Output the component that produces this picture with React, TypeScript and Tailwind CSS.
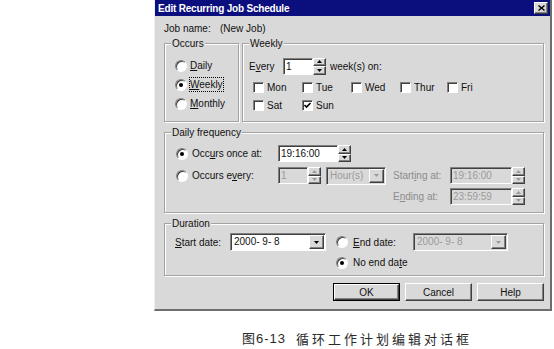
import type { ReactNode } from 'react';

const SUNKEN =
  'border border-t-[#808080] border-l-[#808080] border-b-white border-r-white shadow-[inset_1px_1px_0_#404040]';
const RAISED =
  'border border-t-white border-l-white border-b-[#404040] border-r-[#404040] shadow-[inset_-1px_-1px_0_#808080]';
const ETCHED = 'border border-[#a2a2a2] shadow-[inset_1px_1px_0_#fff,1px_1px_0_#fff]';

// label with a mnemonic letter underlined
function Mn({ t, u }: { t: string; u: number }) {
  return (
    <span className="whitespace-pre">
      {t.slice(0, u)}
      <span className="underline">{t[u]}</span>
      {t.slice(u + 1)}
    </span>
  );
}

function Group({ title, className, children }: { title: string; className: string; children: ReactNode }) {
  return (
    <div className={`relative ${ETCHED} ${className}`}>
      <span className="absolute -top-[7px] left-[6px] px-[1px] bg-[#d9d9d9] leading-[13px]">{title}</span>
      {children}
    </div>
  );
}

function Radio({ checked }: { checked?: boolean }) {
  return (
    <span className="w-[12px] h-[12px] shrink-0 rounded-full bg-white border border-t-[#808080] border-l-[#808080] border-b-white border-r-white shadow-[inset_1px_1px_0_#404040] flex items-center justify-center">
      {checked && <span className="w-[4px] h-[4px] rounded-full bg-black" />}
    </span>
  );
}

function Check({ label, checked }: { label: string; checked?: boolean }) {
  return (
    <div className="flex items-center gap-[3px] h-[13px]">
      <span className={`w-[11px] h-[11px] bg-white ${SUNKEN} flex items-center justify-center`}>
        {checked && (
          <svg width="9" height="9" viewBox="0 0 9 9">
            <path d="M1.5 4 L3.5 6 L7.5 2" fill="none" stroke="#000" strokeWidth="1.6" />
          </svg>
        )}
      </span>
      <span>{label}</span>
    </div>
  );
}

function Arrow({ up, disabled }: { up?: boolean; disabled?: boolean }) {
  return (
    <svg width="5" height="3" viewBox="0 0 5 3">
      <polygon points={up ? '2.5,0 5,3 0,3' : '0,0 5,0 2.5,3'} fill={disabled ? '#9a9a9a' : '#000'} />
    </svg>
  );
}

function Spin({ value, w, disabled }: { value: string; w: string; disabled?: boolean }) {
  return (
    <div className={`flex h-[17px] ${w}`}>
      <div
        className={`flex-1 ${SUNKEN} ${disabled ? 'bg-[#d9d9d9] text-[#9a9a9a]' : 'bg-white'} pl-[2px] leading-[15px]`}
      >
        {value}
      </div>
      <div className="flex flex-col w-[13px]">
        <div className={`flex-1 ${RAISED} bg-[#d9d9d9] flex items-center justify-center`}>
          <Arrow up disabled={disabled} />
        </div>
        <div className={`flex-1 ${RAISED} bg-[#d9d9d9] flex items-center justify-center`}>
          <Arrow disabled={disabled} />
        </div>
      </div>
    </div>
  );
}

function Combo({ value, w, disabled }: { value: string; w: string; disabled?: boolean }) {
  return (
    <div
      className={`flex h-[18px] ${w} ${SUNKEN} ${disabled ? 'bg-[#d9d9d9] text-[#9a9a9a]' : 'bg-white'} p-[1px]`}
    >
      <span className="flex-1 pl-[2px] leading-[14px] whitespace-pre">{value}</span>
      <span className={`w-[15px] ${RAISED} bg-[#d9d9d9] flex items-center justify-center`}>
        <Arrow disabled={disabled} />
      </span>
    </div>
  );
}

function Btn({ children, isDefault }: { children: ReactNode; isDefault?: boolean }) {
  return (
    <div className={`w-[67px] h-[18px] ${isDefault ? 'border border-black' : ''}`}>
      <div className={`w-full h-full ${RAISED} bg-[#d9d9d9] flex items-center justify-center`}>{children}</div>
    </div>
  );
}

export default function App() {
  return (
    <div className="w-[554px] h-[349px] bg-white overflow-hidden font-['Liberation_Sans',Arial,sans-serif] text-[10px] leading-[13px] text-[#111]">
      <div className="ml-[154px] w-[398px] h-[311px] bg-[#d9d9d9] border-l border-l-[#efefef] border-r-2 border-b-2 border-r-[#6e6e6e] border-b-[#6e6e6e]">
        {/* title bar */}
        <div className="h-[16px] bg-[#0b0f7e] flex items-center pl-[3px] pr-[2px]">
          <span className="flex-1 text-white font-bold text-[10px] tracking-[-0.2px]">Edit Recurring Job Schedule</span>
          <span className={`w-[14px] h-[12px] ${RAISED} bg-[#d9d9d9] flex items-center justify-center`}>
            <svg width="7" height="6" viewBox="0 0 7 6">
              <path d="M0.5 0.5 L6.5 5.5 M6.5 0.5 L0.5 5.5" stroke="#000" strokeWidth="1.4" />
            </svg>
          </span>
        </div>

        <div className="pl-[9px]">
          <div className="mt-[6px] flex h-[13px]">
            <span className="w-[56px]">Job name:</span>
            <span>(New Job)</span>
          </div>

          <div className="mt-[8px] flex">
            <Group title="Occurs" className="w-[75px] h-[79px]">
              <div className="pt-[15px] pl-[10px] flex flex-col gap-[6px]">
                <div className="flex items-center gap-[3px] h-[13px]">
                  <Radio />
                  <Mn t="Daily" u={0} />
                </div>
                <div className="flex items-center gap-[3px] h-[13px]">
                  <Radio checked />
                  <span className="outline outline-1 outline-dotted outline-black">
                    <Mn t="Weekly" u={0} />
                  </span>
                </div>
                <div className="flex items-center gap-[3px] h-[13px]">
                  <Radio />
                  <Mn t="Monthly" u={0} />
                </div>
              </div>
            </Group>

            <Group title="Weekly" className="ml-[3px] w-[302px] h-[79px]">
              <div className="pt-[13px] pl-[6px]">
                <div className="flex items-center h-[18px]">
                  <span className="w-[34px]">
                    <Mn t="Every" u={1} />
                  </span>
                  <Spin value="1" w="w-[43px]" />
                  <span className="ml-[4px]">week(s) on:</span>
                </div>
                <div className="mt-[6px] pl-[4px] grid grid-cols-[49px_49px_49px_47px_49px]">
                  <Check label="Mon" />
                  <Check label="Tue" />
                  <Check label="Wed" />
                  <Check label="Thur" />
                  <Check label="Fri" />
                </div>
                <div className="mt-[5px] pl-[4px] grid grid-cols-[49px_49px]">
                  <Check label="Sat" />
                  <Check label="Sun" checked />
                </div>
              </div>
            </Group>
          </div>

          <Group title="Daily frequency" className="mt-[10px] w-[380px] h-[81px]">
            <div className="pt-[12px] pl-[11px]">
              <div className="flex items-center h-[17px]">
                <div className="w-[102px] flex items-center gap-[4px]">
                  <Radio checked />
                  <Mn t="Occurs once at:" u={3} />
                </div>
                <Spin value="19:16:00" w="w-[73px]" />
              </div>
              <div className="mt-[5px] flex items-center h-[17px]">
                <div className="w-[102px] flex items-center gap-[4px]">
                  <Radio />
                  <Mn t="Occurs every:" u={8} />
                </div>
                <Spin value="1" w="w-[43px]" disabled />
                <div className="ml-[5px]">
                  <Combo value="Hour(s)" w="w-[60px]" disabled />
                </div>
                <span className="ml-[7px] w-[57px] text-[#8c8c8c]">
                  <Mn t="Starting at:" u={5} />
                </span>
                <Spin value="19:16:00" w="w-[75px]" disabled />
              </div>
              <div className="mt-[4px] flex items-center h-[17px]">
                <span className="ml-[217px] w-[57px] text-[#8c8c8c]">
                  <Mn t="Ending at:" u={1} />
                </span>
                <Spin value="23:59:59" w="w-[75px]" disabled />
              </div>
            </div>
          </Group>

          <Group title="Duration" className="mt-[10px] w-[380px] h-[53px]">
            <div className="pt-[9px] pl-[10px] flex items-start">
              <div className="flex items-center h-[18px]">
                <span className="w-[55px]">
                  <Mn t="Start date:" u={0} />
                </span>
                <Combo value="2000- 9- 8" w="w-[96px]" />
              </div>
              <div className="ml-[10px] flex flex-col">
                <div className="flex items-center h-[18px]">
                  <Radio />
                  <span className="ml-[5px] w-[60px]">
                    <Mn t="End date:" u={0} />
                  </span>
                  <Combo value="2000- 9- 8" w="w-[95px]" disabled />
                </div>
                <div className="mt-[5px] flex items-center h-[13px]">
                  <Radio checked />
                  <span className="ml-[5px]">
                    <Mn t="No end date" u={9} />
                  </span>
                </div>
              </div>
            </div>
          </Group>

          <div className="mt-[7px] ml-[169px] flex gap-[5px]">
            <Btn isDefault>OK</Btn>
            <Btn>Cancel</Btn>
            <Btn>Help</Btn>
          </div>
        </div>
      </div>

      <div className="mt-[20px] pl-[242px] flex items-center h-[16px] text-[13px] leading-[16px] text-[#2a2a2a] font-['Liberation_Sans','Noto_Sans_CJK_SC',sans-serif]">
        <span className="tracking-[1px]">图6-13</span>
        <span className="ml-[10px] text-[13px] tracking-[3px] font-['Noto_Sans_CJK_SC',sans-serif]">循环工作计划编辑对话框</span>
      </div>
    </div>
  );
}
